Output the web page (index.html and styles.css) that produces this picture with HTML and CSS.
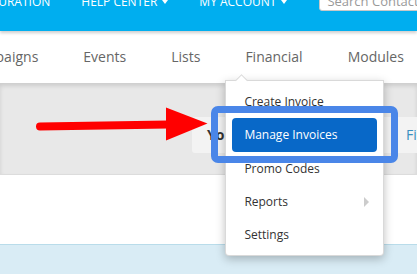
FILE: index.html
```html
<!DOCTYPE html>
<html lang="en">
  <head>
    <meta charset="UTF-8" />
    <meta name="viewport" content="width=device-width, initial-scale=1.0" />
    <title>Manage Invoices</title>
    <link rel="stylesheet" href="styles.css">
  </head>
  <body>
    <div class="page">
      <header class="topbar">
        <a class="top-link">CONFIGURATION</a>
        <a class="top-link">HELP CENTER <span class="caret"></span></a>
        <a class="top-link">MY ACCOUNT <span class="caret"></span></a>
        <input class="search" type="text" placeholder="Search Contacts" />
      </header>

      <ul class="mainnav">
        <li class="nav-item">Campaigns</li>
        <li class="nav-item">Events</li>
        <li class="nav-item">Lists</li>
        <li class="nav-item has-menu">
          Financial
          <ul class="dropdown">
            <li class="menu-item">Create Invoice</li>
            <li class="menu-item active">Manage Invoices</li>
            <li class="menu-item">Promo Codes</li>
            <li class="menu-item sub">Reports <span class="sub-arrow"></span></li>
            <li class="menu-item">Settings</li>
          </ul>
        </li>
        <li class="nav-item">Modules</li>
      </ul>

      <section class="band">
        <div class="notice">
          <strong>Your invoices</strong>
          <a class="notice-link">Find them here</a>
        </div>
      </section>
      <section class="blank"></section>
      <section class="info"></section>

      <!-- annotation -->
      <svg class="arrow" width="180" height="40" viewBox="30 104 180 40">
        <line x1="40" y1="126.5" x2="168" y2="124.5" stroke="#ff0000" stroke-width="8" stroke-linecap="round" />
        <polygon points="166,107.5 207.5,123.5 166,140.5" fill="#ff0000" />
      </svg>
      <div class="focus-ring"></div>
    </div>
  </body>
</html>
```

FILE: styles.css
```css
body {
  margin: 0;
  font-family: "Open Sans", "Liberation Sans", sans-serif;
  background-color: #fff;
  overflow: hidden;
}
.page {
  position: relative;
  width: 417px;
  height: 274px;
  overflow: hidden;
}
.topbar {
  position: relative;
  z-index: 2;
  height: 31px;
  background-color: #00aeef;
  display: flex;
  align-items: flex-start;
  gap: 31px;
  box-shadow: 0 2px 3px rgba(0, 0, 0, 0.2);
}
.top-link {
  margin-top: -7px;
  color: #fff;
  font-size: 12px;
  line-height: 18px;
  white-space: nowrap;
  display: flex;
  align-items: center;
  gap: 5px;
}
.top-link:first-child {
  margin-left: -46px;
}
.caret {
  width: 0;
  height: 0;
  border-top: 4px solid #fff;
  border-left: 3.5px solid transparent;
  border-right: 3.5px solid transparent;
}
.search {
  margin-top: -17px;
  margin-left: 1px;
  height: 28px;
  width: 140px;
  box-sizing: border-box;
  padding: 8px 7px 0;
  border: 1px solid #c8c8c8;
  border-radius: 3px;
  font-family: "Open Sans", sans-serif;
  font-size: 13px;
  flex-shrink: 0;
}
.search::placeholder {
  color: #999;
}
.mainnav {
  list-style: none;
  margin: 0;
  padding: 0;
  height: 52px;
  background-color: #fff;
  display: flex;
  gap: 45px;
}
.nav-item {
  position: relative;
  color: #666;
  font-size: 14px;
  line-height: 52px;
  white-space: nowrap;
}
.nav-item:first-child {
  margin-left: -34px;
}
.dropdown {
  position: absolute;
  z-index: 3;
  left: -20px;
  top: 49px;
  width: 159px;
  box-sizing: border-box;
  list-style: none;
  margin: 0;
  padding: 4px 0;
  background-color: #fff;
  border: 1px solid rgba(0, 0, 0, 0.15);
  border-radius: 0 0 4px 4px;
  box-shadow: 0 3px 10px rgba(0, 0, 0, 0.25);
}
.dropdown::before {
  content: "";
  position: absolute;
  left: 11px;
  top: -5px;
  width: 8px;
  height: 8px;
  background-color: #fff;
  border-top: 1px solid rgba(0, 0, 0, 0.15);
  border-left: 1px solid rgba(0, 0, 0, 0.15);
  transform: rotate(45deg);
}
.menu-item {
  position: relative;
  height: 33px;
  line-height: 33px;
  margin: 0 6px;
  padding: 0 12px;
  color: #333;
  font-size: 12px;
  display: flex;
  align-items: center;
}
.menu-item.active {
  height: 34px;
  line-height: 34px;
  background-color: #0868c8;
  color: #fff;
  border-radius: 4px;
}
.sub-arrow {
  margin-left: auto;
  margin-right: -4px;
  width: 0;
  height: 0;
  border-left: 5px solid #ccc;
  border-top: 5px solid transparent;
  border-bottom: 5px solid transparent;
}
.band {
  height: 92px;
  box-sizing: border-box;
  padding: 34px 0 0 192px;
  background-color: #e8e8e8;
  border-bottom: 1px solid #dcdcdc;
  box-shadow: inset 0 3px 4px rgba(0, 0, 0, 0.12);
}
.notice {
  height: 36px;
  width: 300px;
  display: grid;
  grid-template-columns: 199px auto;
  padding-left: 15px;
  background-color: #f3f3f3;
  border-radius: 3px;
  font-size: 14px;
  line-height: 36px;
  white-space: nowrap;
  overflow: hidden;
}
.notice strong {
  color: #333;
}
.notice-link {
  color: #3a8fc0;
}
.blank {
  height: 69px;
}
.info {
  height: 40px;
  background-color: #d9ecf5;
  border-top: 1px solid #b9dcea;
}
.arrow {
  position: absolute;
  left: 30px;
  top: 104px;
  z-index: 4;
}
.focus-ring {
  position: absolute;
  z-index: 5;
  left: 211px;
  top: 106px;
  width: 187px;
  height: 57px;
  box-sizing: border-box;
  border: 7px solid #4a86e8;
  border-radius: 7px;
}
```
